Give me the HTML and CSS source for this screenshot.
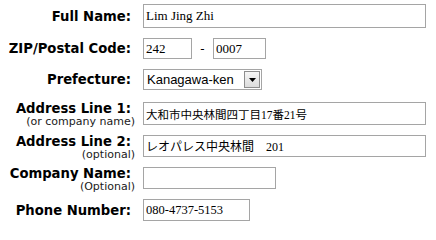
FILE: index.html
```html
<!DOCTYPE html>
<html lang="ja">
<head>
<meta charset="utf-8">
<title>Address Form</title>
<link rel="stylesheet" href="styles.css">
</head>
<body>
<form class="form">
  <div class="row row-gap10">
    <label class="label"><span class="main">Full Name:</span></label>
    <input class="field field-full field-tall latin" type="text" value="Lim Jing Zhi">
  </div>
  <div class="row row-gap10">
    <label class="label"><span class="main">ZIP/Postal Code:</span></label>
    <input class="field field-zip1 latin" type="text" value="242">
    <span class="dash">-</span>
    <input class="field field-zip2 latin" type="text" value="0007">
  </div>
  <div class="row row-gap12">
    <label class="label"><span class="main">Prefecture:</span></label>
    <span class="select-wrap">
      <select class="select">
        <option>Kanagawa-ken</option>
      </select>
      <span class="select-btn"><svg width="7" height="4" viewBox="0 0 7 4"><path d="M0 0H7L3.5 4Z" fill="#000"/></svg></span>
    </span>
  </div>
  <div class="row row-two row-gap7">
    <label class="label"><span class="main">Address Line 1:</span><span class="sub">(or company name)</span></label>
    <input class="field field-full field-mid cjk cjk-narrow" type="text" value="大和市中央林間四丁目17番21号">
  </div>
  <div class="row row-two row-gap6">
    <label class="label"><span class="main">Address Line 2:</span><span class="sub">(optional)</span></label>
    <input class="field field-full cjk" type="text" value="レオパレス中央林間　201">
  </div>
  <div class="row row-two row-gap6">
    <label class="label"><span class="main">Company Name:</span><span class="sub">(Optional)</span></label>
    <input class="field field-company cjk" type="text" value="">
  </div>
  <div class="row">
    <label class="label"><span class="main">Phone Number:</span></label>
    <input class="field field-phone latin-sm" type="text" value="080-4737-5153">
  </div>
</form>
</body>
</html>
```

FILE: styles.css
```css
html, body {
  margin: 0;
  padding: 0;
  background: #ffffff;
}

body {
  font-family: "DejaVu Sans", Verdana, sans-serif;
  color: #000000;
}

.form {
  padding-top: 4px;
  width: 436px;
}

.row {
  display: flex;
  align-items: center;
}

.row-two {
  align-items: flex-start;
}

.row-gap10 { margin-bottom: 10px; }
.row-gap12 { margin-bottom: 12px; }
.row-gap7 { margin-bottom: 7px; }
.row-gap6 { margin-bottom: 6px; }

.label {
  flex: 0 0 135px;
  margin-right: 8px;
  display: flex;
  flex-direction: column;
  align-items: flex-end;
}

.main {
  font-weight: bold;
  font-size: 13.2px;
  line-height: 15px;
  padding-right: 4px;
  white-space: nowrap;
}

.row-two .main {
  margin-top: -1px;
}

.sub {
  font-size: 11px;
  line-height: 12px;
  color: #1a1a1a;
  white-space: nowrap;
}

.field {
  box-sizing: border-box;
  height: 21px;
  margin: 0;
  border: 1px solid #a5a5a5;
  padding: 0 0 0 2px;
  background: #ffffff;
  color: #000000;
  outline: none;
}

.field-tall { height: 24px; }
.row-two .field { height: 22px; }
.row-two .field-mid { height: 23px; }

.latin {
  font-family: "Liberation Serif", "Times New Roman", serif;
  font-size: 13px;
}

.latin-sm {
  font-family: "Liberation Serif", "Times New Roman", serif;
  font-size: 12.5px;
  height: 22px;
}

.cjk {
  font-family: "Liberation Serif", "Noto Sans CJK JP", serif;
  font-size: 12px;
}

.cjk-narrow {
  font-size: 11.5px;
}

.field-full { width: 283px; }
.field-zip1 { width: 49px; }
.field-zip2 { width: 53px; }
.field-company { width: 133px; }
.field-phone { width: 107px; }

.dash {
  width: 21px;
  text-align: center;
  font-size: 12px;
  font-family: "DejaVu Sans", Verdana, sans-serif;
}

.select-wrap {
  position: relative;
  display: inline-block;
  width: 119px;
  height: 21px;
}

.select {
  -webkit-appearance: none;
  appearance: none;
  box-sizing: border-box;
  width: 119px;
  height: 21px;
  margin: 0;
  border: 1px solid #a5a5a5;
  border-radius: 0;
  padding: 0 0 0 3px;
  background: #ffffff;
  font-family: "Liberation Sans", Arial, sans-serif;
  font-size: 13px;
  color: #000000;
  outline: none;
}

.select-btn {
  position: absolute;
  right: 2px;
  top: 2px;
  box-sizing: border-box;
  width: 16px;
  height: 17px;
  border: 1px solid #8e8e8e;
  background: linear-gradient(#f6f6f6, #dcdcdc);
  display: flex;
  align-items: center;
  justify-content: center;
  pointer-events: none;
}

.select-btn svg {
  display: block;
}
```
